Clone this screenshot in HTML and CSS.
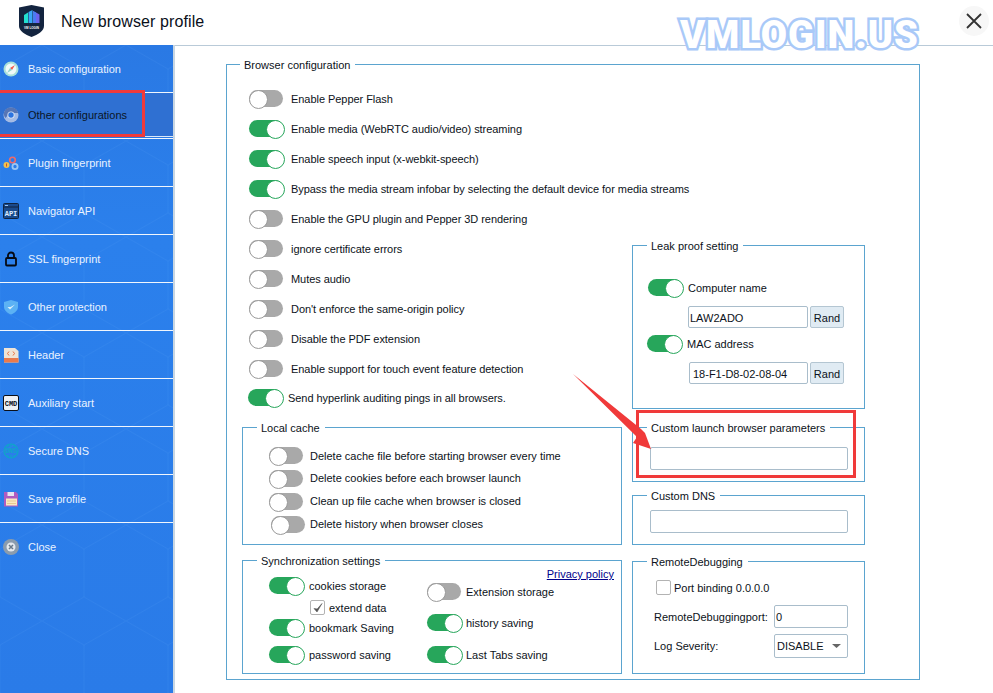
FILE: index.html
```html
<!DOCTYPE html>
<html lang="en">
<head>
<meta charset="utf-8">
<title>New browser profile</title>
<link rel="stylesheet" href="styles.css">
</head>
<body>
<div class="app">
  <header class="titlebar">
    <svg class="logo" viewBox="0 0 25 32" width="25" height="32" aria-hidden="true">
      <path d="M0 2.5 12.5 0 25 2.5V21c0 5-6 8.500-12.500 11C6 29.500 0 26 0 21Z" fill="#13243f"/>
      <path d="M5 10 9 7.500V18H5Z" fill="#22e0d0"/>
      <path d="M9.500 7 13.500 5V18H9.500Z" fill="#3aa6f5"/>
      <path d="M14 6 17 7.500 20.500 9.500V18H14Z" fill="#6c63ee"/>
      <path d="M14 6 17 7.500V18H14Z" fill="#4a7cf0"/>
      <text x="12.500" y="23.500" class="logo-text">VM LOGIN</text>
    </svg>
    <h1 class="title">New browser profile</h1>
    <button class="close-btn" aria-label="Close">
      <svg viewBox="0 0 16 16" width="16" height="16"><path d="M1 1 15 15M15 1 1 15" stroke="#333" stroke-width="1.800" fill="none"/></svg>
    </button>
  </header>

  <div class="body">
    <nav class="sidebar">
      <svg class="hexes" width="173" height="648" aria-hidden="true">
        <defs>
          <pattern id="hex" width="84" height="96" patternUnits="userSpaceOnUse">
            <path d="M42 0 84 24V72L42 96 0 72V24ZM42 0V-20M42 96V116" fill="none" stroke="#7fb6ff" stroke-opacity=".08"/>
          </pattern>
        </defs>
        <rect width="173" height="648" fill="url(#hex)"/>
      </svg>

      <a class="nav-item">
        <svg class="nav-icon" viewBox="0 0 16 16"><circle cx="8" cy="8" r="7.500" fill="#a9e0da"/><circle cx="8" cy="8" r="5.500" fill="#f0faf8"/><path d="M12 4 9 9 7 7Z" fill="#ef5b4c"/><path d="M4 12 7 7 9 9Z" fill="#8fd3cf"/></svg>
        <span>Basic configuration</span>
      </a>
      <a class="nav-item nav-item-active">
        <svg class="nav-icon" viewBox="0 0 16 16"><circle cx="8" cy="8" r="7.500" fill="#a5bbe4"/><path d="M.8 6A7.500 7.500 0 0 1 15.200 6H8A3 3 0 0 0 5 8L2.500 11A7.500 7.500 0 0 1 .8 6Z" fill="#5675b5"/><circle cx="8" cy="8" r="3.600" fill="#dce6f5"/><circle cx="8" cy="8" r="2.700" fill="#2c74e0"/></svg>
        <span>Other configurations</span>
      </a>
      <a class="nav-item">
        <svg class="nav-icon" viewBox="0 0 16 16"><circle cx="3.500" cy="10" r="3" fill="#f3c14c"/><path d="M3.500 8.500V11.500" stroke="#c6542e"/><circle cx="9.500" cy="5" r="2.800" fill="none" stroke="#ee6a6a" stroke-width="1.600"/><circle cx="12" cy="11.500" r="2.600" fill="none" stroke="#9cc6f2" stroke-width="1.800"/></svg>
        <span>Plugin fingerprint</span>
      </a>
      <a class="nav-item">
        <svg class="nav-icon" viewBox="0 0 16 16"><rect x=".5" y=".5" width="15" height="15" rx="1" fill="#1a4a8c" stroke="#10233f"/><path d="M1 4H15" stroke="#10233f"/><path d="M2 2.500H5" stroke="#9cc6f2"/><text x="8" y="12.500" class="icon-text icon-text-api">API</text></svg>
        <span>Navigator API</span>
      </a>
      <a class="nav-item">
        <svg class="nav-icon" viewBox="0 0 16 16"><path d="M5 7V4.500a3 3 0 0 1 6 0V7" fill="none" stroke="#050a14" stroke-width="1.800"/><rect x="3" y="7" width="10" height="7.500" rx="1" fill="none" stroke="#050a14" stroke-width="1.800"/></svg>
        <span>SSL fingerprint</span>
      </a>
      <a class="nav-item">
        <svg class="nav-icon" viewBox="0 0 16 16"><path d="M8 1 15 3V8c0 3.500-3.500 6-7 7.500C4.500 14 1 11.500 1 8V3Z" fill="#5cb2f4"/><path d="M4.500 8 7 10.500 12 5.500 7.500 8Z" fill="#d8effa"/></svg>
        <span>Other protection</span>
      </a>
      <a class="nav-item">
        <svg class="nav-icon" viewBox="0 0 16 16"><path d="M1 1H12L15.500 4V15.500H1Z" fill="#f0e4d6"/><rect x="1" y="11" width="14.500" height="4.500" fill="#ea7a4c"/><path d="M6 4.500 4.500 6.500 6 8.500M10 4.500 11.500 6.500 10 8.500" stroke="#e8703c" fill="none"/></svg>
        <span>Header</span>
      </a>
      <a class="nav-item">
        <svg class="nav-icon" viewBox="0 0 16 16"><rect x=".5" y=".5" width="15" height="15" rx="1.500" fill="#eef1f4" stroke="#0a0f18"/><text x="8" y="10.500" class="icon-text icon-text-cmd">CMD</text></svg>
        <span>Auxiliary start</span>
      </a>
      <a class="nav-item">
        <svg class="nav-icon" viewBox="0 0 16 16"><circle cx="8" cy="8" r="7" fill="none" stroke="#0fa6c8" stroke-width="1.200"/><path d="M5 1.500V4M8 1V4M11 1.500V4M5 12V14.500M8 12V15M11 12V14.500" stroke="#0fa6c8"/><text x="8" y="10.300" class="icon-text icon-text-dns">DNS</text></svg>
        <span>Secure DNS</span>
      </a>
      <a class="nav-item">
        <svg class="nav-icon" viewBox="0 0 16 16"><path d="M1 1H13L15 3V15.500H1Z" fill="#b05cc0"/><rect x="4.500" y="1" width="6.500" height="4" fill="#e8e4f0"/><rect x="3" y="7.500" width="11" height="7" fill="#f8e8c0"/><path d="M4 10H13M4 12.500H13" stroke="#e8c890"/></svg>
        <span>Save profile</span>
      </a>
      <a class="nav-item">
        <svg class="nav-icon" viewBox="0 0 16 16"><circle cx="8" cy="8" r="8" fill="#8b9cad"/><circle cx="8" cy="8" r="4.500" fill="#e4e9ee"/><path d="M6 6 10 10M10 6 6 10" stroke="#6a7a8a" stroke-width="1.500"/></svg>
        <span>Close</span>
      </a>
    </nav>

    <main class="main">
      <section class="group group-outer">
        <h2 class="legend legend-outer">Browser configuration</h2>
        <div class="config-grid">
          <div class="option-list">
            <label class="opt"><span class="toggle"></span><span class="opt-text">Enable Pepper Flash</span></label>
            <label class="opt"><span class="toggle on"></span><span class="opt-text">Enable media (WebRTC audio/video) streaming</span></label>
            <label class="opt"><span class="toggle on"></span><span class="opt-text">Enable speech input (x-webkit-speech)</span></label>
            <label class="opt"><span class="toggle on"></span><span class="opt-text">Bypass the media stream infobar by selecting the default device for media streams</span></label>
            <label class="opt"><span class="toggle"></span><span class="opt-text">Enable the GPU plugin and Pepper 3D rendering</span></label>
            <label class="opt"><span class="toggle"></span><span class="opt-text">ignore certificate errors</span></label>
            <label class="opt"><span class="toggle"></span><span class="opt-text">Mutes audio</span></label>
            <label class="opt"><span class="toggle"></span><span class="opt-text">Don't enforce the same-origin policy</span></label>
            <label class="opt"><span class="toggle"></span><span class="opt-text">Disable the PDF extension</span></label>
            <label class="opt"><span class="toggle"></span><span class="opt-text">Enable support for touch event feature detection</span></label>
            <label class="opt opt-last"><span class="toggle on"></span><span class="opt-text">Send hyperlink auditing pings in all browsers.</span></label>
          </div>

          <section class="group group-leak">
            <h2 class="legend">Leak proof setting</h2>
            <div class="leak-body">
              <label class="leak-opt"><span class="toggle on"></span><span>Computer name</span></label>
              <div class="leak-field"><input class="field field-name" value="LAW2ADO"><button class="rand">Rand</button></div>
              <label class="leak-opt leak-opt-mac"><span class="toggle on"></span><span>MAC address</span></label>
              <div class="leak-field"><input class="field field-mac" value="18-F1-D8-02-08-04"><button class="rand">Rand</button></div>
            </div>
          </section>

          <section class="group group-cache">
            <h2 class="legend">Local cache</h2>
            <div class="cache-list">
              <label class="cache-opt"><span class="toggle"></span><span>Delete cache file before starting browser every time</span></label>
              <label class="cache-opt"><span class="toggle"></span><span>Delete cookies before each browser launch</span></label>
              <label class="cache-opt"><span class="toggle"></span><span>Clean up file cache when browser is closed</span></label>
              <label class="cache-opt cache-opt-last"><span class="toggle"></span><span>Delete history when browser closes</span></label>
            </div>
          </section>

          <div class="right-stack">
            <section class="group group-launch">
              <h2 class="legend">Custom launch browser parameters</h2>
              <input class="field field-wide">
            </section>
            <section class="group group-dns">
              <h2 class="legend">Custom DNS</h2>
              <input class="field field-wide">
            </section>
          </div>

          <section class="group group-sync">
            <h2 class="legend">Synchronization settings</h2>
            <div class="sync-body">
              <div class="sync-left">
                <label class="sync-opt"><span class="toggle on"></span><span>cookies storage</span></label>
                <label class="sync-check"><span class="checkbox checked"><svg viewBox="0 0 14 14" width="14" height="14"><path d="M3 7.500 6 11 11 2.500 6.200 8Z" fill="#555" stroke="#555" stroke-width=".6"/></svg></span><span>extend data</span></label>
                <label class="sync-opt sync-bookmark"><span class="toggle on"></span><span>bookmark Saving</span></label>
                <label class="sync-opt sync-password"><span class="toggle on"></span><span>password saving</span></label>
              </div>
              <div class="sync-right">
                <a class="privacy">Privacy policy</a>
                <label class="sync-opt sync-ext"><span class="toggle"></span><span>Extension storage</span></label>
                <label class="sync-opt sync-hist"><span class="toggle on"></span><span>history saving</span></label>
                <label class="sync-opt sync-tabs"><span class="toggle on"></span><span>Last Tabs saving</span></label>
              </div>
            </div>
          </section>

          <section class="group group-remote">
            <h2 class="legend">RemoteDebugging</h2>
            <label class="port-bind"><span class="checkbox"></span><span>Port binding 0.0.0.0</span></label>
            <div class="remote-row remote-port"><span>RemoteDebuggingport:</span><input class="field field-port" value="0"></div>
            <div class="remote-row remote-log"><span>Log Severity:</span>
              <div class="select"><span>DISABLE</span><svg viewBox="0 0 9 4" width="9" height="4"><path d="M0 0H9L4.500 4Z" fill="#666"/></svg></div>
            </div>
          </section>
        </div>
      </section>
    </main>
  </div>

  <div class="watermark">VMLOGIN.US</div>
  <div class="mark mark-nav"></div>
  <div class="mark mark-param"></div>
  <svg class="arrow" width="993" height="693" aria-hidden="true"><path d="M573 374 641 429 645 433 651 449 633 443 637 437Z" fill="#f03a3a"/></svg>
</div>
</body>
</html>
```

FILE: styles.css
```css
* { box-sizing: border-box; }
html, body { margin: 0; padding: 0; }
body {
  width: 993px;
  height: 693px;
  overflow: hidden;
  background: #fff;
  font-family: "Liberation Sans", Arial, sans-serif;
  font-size: 11px;
  color: #0c1220;
}
.app { position: relative; width: 993px; height: 693px; overflow: hidden; }

/* title bar */
.titlebar {
  display: flex;
  align-items: center;
  height: 45px;
  padding: 0 4px 3px 19px;
}
.logo { flex: none; }
.logo-text { font: bold 3px "Liberation Sans", sans-serif; fill: #fff; text-anchor: middle; }
.title {
  margin: 2px 0 0 17px;
  font-family: "Liberation Sans", Arial, sans-serif;
  font-size: 16px;
  font-weight: 400;
  letter-spacing: .1px;
  color: #0a0f1a;
}
.close-btn {
  display: flex;
  align-items: center;
  justify-content: center;
  width: 30px;
  height: 30px;
  margin-left: auto;
  padding: 0;
  border: 0;
  border-radius: 50%;
  background: #f7f7f7;
}

.body { display: flex; height: 648px; border-top: 1px solid #b9cad8; }

/* sidebar */
.sidebar {
  position: relative;
  flex: none;
  width: 175px;
  margin-top: -1px;
  border-right: 2px solid #c8d6e2;
  background: linear-gradient(180deg, #2a79e4 0%, #2b80ec 30%, #2a7be8 100%);
}
.hexes { position: absolute; left: 0; top: 0; }
.nav-item {
  position: relative;
  display: flex;
  align-items: center;
  gap: 9px;
  height: 48px;
  padding-left: 3px;
  border-bottom: 1px solid #f1f6fd;
  color: #e9f2ff;
  font-size: 11px;
}
.nav-item:last-child { border-bottom: 0; }
.nav-item-active {
  height: 46px;
  padding-bottom: 2px;
  color: #0b1626;
  background: #2f70d2;
  box-shadow: inset 0 -1px 0 #2a79e4, inset 0 -2px 0 #dbe8f8;
}
.nav-icon { flex: none; width: 16px; height: 16px; }
.icon-text { font-family: "Liberation Mono", monospace; font-weight: 700; text-anchor: middle; }
.icon-text-api { font-size: 7px; fill: #dcecff; }
.icon-text-cmd { font-size: 7px; fill: #0a0f18; }
.icon-text-dns { font-size: 6.500px; fill: #0fa6c8; }

/* main */
.main { flex: 1; padding: 18px 0 0 51px; }
.group { border: 1px solid #5ba4cf; background: #fff; }
.legend {
  width: fit-content;
  height: 14px;
  margin: -7px 0 0 14px;
  padding: 0 5px 0 4px;
  background: #fff;
  font-size: 11px;
  font-weight: 400;
  line-height: 14px;
  white-space: nowrap;
}
.group-outer { width: 694px; height: 616px; }
.legend-outer { margin-left: 13px; }
.config-grid {
  display: grid;
  grid-template-columns: 380px 233px;
  grid-template-rows: 329px 118px 114px;
  column-gap: 10px;
  row-gap: 15px;
  padding: 11px 0 0 15px;
}

/* toggle */
.toggle {
  position: relative;
  display: block;
  flex: none;
  width: 34px;
  height: 17px;
  border-radius: 9px;
  background: #a9a9a9;
}
.toggle::after {
  content: "";
  position: absolute;
  left: 0;
  top: 0;
  width: 17px;
  height: 17px;
  border: 1px solid #9a9a9a;
  border-radius: 50%;
  background: #fff;
}
.toggle.on { background: #27a65b; }
.toggle.on::after { left: 17px; border-color: #27a65b; }

/* main option list */
.option-list { display: flex; flex-direction: column; white-space: nowrap; }
.opt {
  display: flex;
  align-items: center;
  gap: 8px;
  height: 30px;
  padding-left: 7px;
}
.opt-text { padding-top: 2px; letter-spacing: -.05px; }
.opt-last { height: 28px; padding-left: 6px; gap: 6px; }

/* leak */
.group-leak { align-self: end; height: 164px; margin-bottom: 3px; }
.leak-body { padding-top: 26px; }
.leak-opt { display: flex; align-items: center; gap: 6px; height: 17px; padding-left: 15px; }
.leak-opt-mac { margin-top: 7px; padding-left: 14px; }
.leak-field { display: flex; align-items: center; margin-top: 10px; height: 22px; }
.field {
  display: block;
  height: 22px;
  padding: 1px 1px 0;
  border: 1px solid #a9bdcb;
  border-radius: 2px;
  background: #fff;
  font-family: inherit;
  font-size: 11px;
  color: #0c1220;
  outline: none;
}
.field-name { width: 120px; margin-left: 55px; }
.field-mac { width: 119px; margin-left: 56px; padding-left: 3px; }
.rand {
  width: 34px;
  height: 22px;
  margin-left: 2px;
  padding: 1px 0 0;
  border: 1px solid #b4c6d2;
  border-radius: 2px;
  background: #e0ebf3;
  font-family: inherit;
  font-size: 11px;
  color: #0c1220;
}

/* cache */
.cache-list { display: flex; flex-direction: column; gap: 5.900px; padding: 12px 0 0 26px; }
.cache-opt { display: flex; align-items: center; gap: 7px; height: 17px; }
.cache-opt-last { padding-left: 2px; gap: 5px; }

/* right stack */
.right-stack { display: flex; flex-direction: column; gap: 13px; }
.group-launch { height: 55px; }
.group-dns { height: 50px; }
.field-wide { width: 198px; height: 23px; margin: 12px 0 0 17px; }
.group-dns .field-wide { margin-top: 7px; }

/* sync */
.group-sync { height: 114px; }
.sync-body { display: grid; grid-template-columns: 158px 187px; padding-left: 26px; }
.sync-left { padding-top: 9px; }
.sync-opt { display: flex; align-items: center; gap: 6px; height: 17px; white-space: nowrap; }
.sync-check { display: flex; align-items: center; gap: 4px; height: 15px; margin: 6px 0 0 41px; }
.checkbox {
  display: block;
  flex: none;
  width: 15px;
  height: 15px;
  border: 1px solid #b3b3b3;
  border-radius: 2px;
  background: #fff;
}
.sync-bookmark { margin-top: 4px; }
.sync-password { margin-top: 10px; }
.sync-right { display: flex; flex-direction: column; }
.privacy { align-self: flex-end; height: 14px; margin-top: -1px; line-height: 14px; color: #00008b; text-decoration: underline; }
.sync-ext { margin-top: 2px; gap: 5px; }
.sync-hist { margin-top: 14px; gap: 5px; }
.sync-tabs { margin-top: 15px; gap: 5px; }

/* remote */
.group-remote { height: 113px; margin-top: 1px; }
.port-bind { display: flex; align-items: center; gap: 3px; height: 15px; margin: 11px 0 0 23px; }
.remote-row { display: flex; align-items: center; justify-content: space-between; padding: 0 16px 0 21px; }
.remote-port { margin-top: 10px; }
.remote-log { margin-top: 6px; }
.field-port { width: 74px; height: 23px; }
.select {
  display: flex;
  align-items: center;
  justify-content: space-between;
  width: 74px;
  height: 24px;
  padding: 0 6px 0 2px;
  border: 1px solid #a9bdcb;
  border-radius: 2px;
  background: #fff;
}

/* overlays */
.watermark {
  position: absolute;
  left: 680px;
  top: 13px;
  font-family: Roboto, "Liberation Sans", sans-serif;
  font-size: 38px;
  font-weight: 900;
  line-height: 44px;
  letter-spacing: 1px;
  color: #fff;
  -webkit-text-stroke: 5px #a9c9f8;
  paint-order: stroke fill;
  white-space: nowrap;
}
.mark { position: absolute; border: 3px solid #f03a3a; }
.mark-nav { left: -3px; top: 90px; width: 148px; height: 47px; }
.mark-param { left: 636px; top: 410px; width: 220px; height: 68px; }
.arrow { position: absolute; left: 0; top: 0; pointer-events: none; }
```
